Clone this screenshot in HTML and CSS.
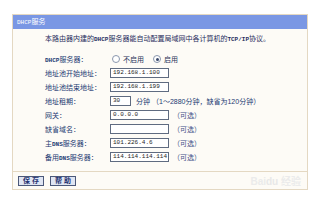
FILE: index.html
```html
<!DOCTYPE html>
<html>
<head>
<meta charset="utf-8">
<title>DHCP服务</title>
<link rel="stylesheet" href="styles.css">
</head>
<body>
<div class="panel">
  <div class="head"><span class="en">DHCP</span>服务</div>
  <div class="body">
    <p class="intro">本路由器内建的<span class="en">DHCP</span>服务器能自动配置局域网中各计算机的<span class="en">TCP/IP</span>协议。</p>
    <div class="form">
      <div class="row">
        <span class="label"><span class="en">DHCP</span>服务器：</span>
        <span class="opt"><span class="radio"></span>不启用</span>
        <span class="opt"><span class="radio on"></span>启用</span>
      </div>
      <div class="row">
        <span class="label">地址池开始地址：</span>
        <span class="field">192.168.1.100</span>
      </div>
      <div class="row">
        <span class="label">地址池结束地址：</span>
        <span class="field">192.168.1.199</span>
      </div>
      <div class="row">
        <span class="label">地址租期：</span>
        <span class="field short">30</span>
        <span class="unit">分钟</span>
        <span class="hint">（1～2880分钟，缺省为120分钟）</span>
      </div>
      <div class="row">
        <span class="label">网关：</span>
        <span class="field">0.0.0.0</span>
        <span class="note">（可选）</span>
      </div>
      <div class="row">
        <span class="label">缺省域名：</span>
        <span class="field"></span>
        <span class="note">（可选）</span>
      </div>
      <div class="row">
        <span class="label">主<span class="en">DNS</span>服务器：</span>
        <span class="field">101.226.4.6</span>
        <span class="note">（可选）</span>
      </div>
      <div class="row">
        <span class="label">备用<span class="en">DNS</span>服务器：</span>
        <span class="field">114.114.114.114</span>
        <span class="note">（可选）</span>
      </div>
    </div>
  </div>
  <div class="foot">
    <span class="btn">保 存</span>
    <span class="btn">帮 助</span>
  </div>
  <div class="mark">Bai<span class="paw">du</span> 经验<small>jingyan.baidu.com</small></div>
</div>
</body>
</html>
```

FILE: styles.css
```css
html, body {
  margin: 0;
  padding: 0;
  background: #ffffff;
}
body {
  font-family: "Liberation Sans", "Noto Sans CJK SC", sans-serif;
  font-size: 7px;
  color: #233468;
}
.en {
  font-family: "Liberation Mono", "Noto Sans CJK SC", monospace;
  font-size: 6px;
  font-weight: bold;
}
.panel {
  position: relative;
  margin: 14px 0 0 12px;
  width: 296px;
  box-sizing: border-box;
  border: 1px solid #e4d8c2;
  background: #fdfbf6;
}
.head {
  height: 14px;
  line-height: 14px;
  background: #7a97e4;
  color: #ffffff;
  padding-left: 4px;
  font-size: 7px;
}
.head .en {
  font-weight: normal;
}
.body {
  padding: 5px 0 7px 32px;
}
.intro {
  margin: 0 0 8px 0;
  height: 10px;
  line-height: 10px;
  white-space: nowrap;
  color: #1f2c5c;
}
.form {
  display: flex;
  flex-direction: column;
}
.row {
  height: 14px;
  display: flex;
  align-items: center;
  white-space: nowrap;
}
.label {
  width: 65px;
  flex: none;
  color: #233a72;
}
.opt {
  display: inline-flex;
  align-items: center;
  margin-right: 7px;
  margin-left: 2px;
  color: #2a3358;
}
.radio {
  width: 6px;
  height: 6px;
  border: 1px solid #8a97ad;
  border-radius: 50%;
  background: #ffffff;
  margin-right: 3px;
  position: relative;
  box-sizing: content-box;
}
.radio.on::after {
  content: "";
  position: absolute;
  left: 1.5px;
  top: 1.5px;
  width: 3px;
  height: 3px;
  border-radius: 50%;
  background: #3b4a6b;
}
.field {
  width: 59px;
  height: 10px;
  box-sizing: border-box;
  border: 1px solid #5f6b80;
  background: #ffffff;
  font-family: "Liberation Mono", monospace;
  font-size: 6px;
  line-height: 8px;
  padding-left: 2px;
  color: #1e1e1e;
  flex: none;
}
.field.short {
  width: 21px;
}
.unit {
  margin-left: 5px;
  color: #233a72;
}
.hint {
  margin-left: 2px;
  color: #233a72;
}
.note {
  margin-left: 4px;
  color: #3f4f86;
}
.foot {
  border-top: 1px solid #e4d8c2;
  height: 17px;
  display: flex;
  align-items: center;
  gap: 6px;
  padding-left: 5px;
}
.btn {
  display: inline-block;
  height: 10px;
  line-height: 8px;
  padding: 0 4px;
  box-sizing: border-box;
  border: 1px solid #4b587a;
  background: #dfe5f3;
  color: #1f3270;
  font-size: 7px;
  font-weight: bold;
}
.mark {
  position: absolute;
  right: 6px;
  bottom: 2px;
  color: #ebebeb;
  font-size: 10px;
  font-weight: bold;
  line-height: 11px;
  text-align: right;
}
.mark .paw {
  color: #e8e8e8;
}
.mark small {
  position: absolute;
  right: 4px;
  top: 13px;
  font-size: 6px;
  font-weight: normal;
  color: #f0f0f0;
  white-space: nowrap;
}
```
